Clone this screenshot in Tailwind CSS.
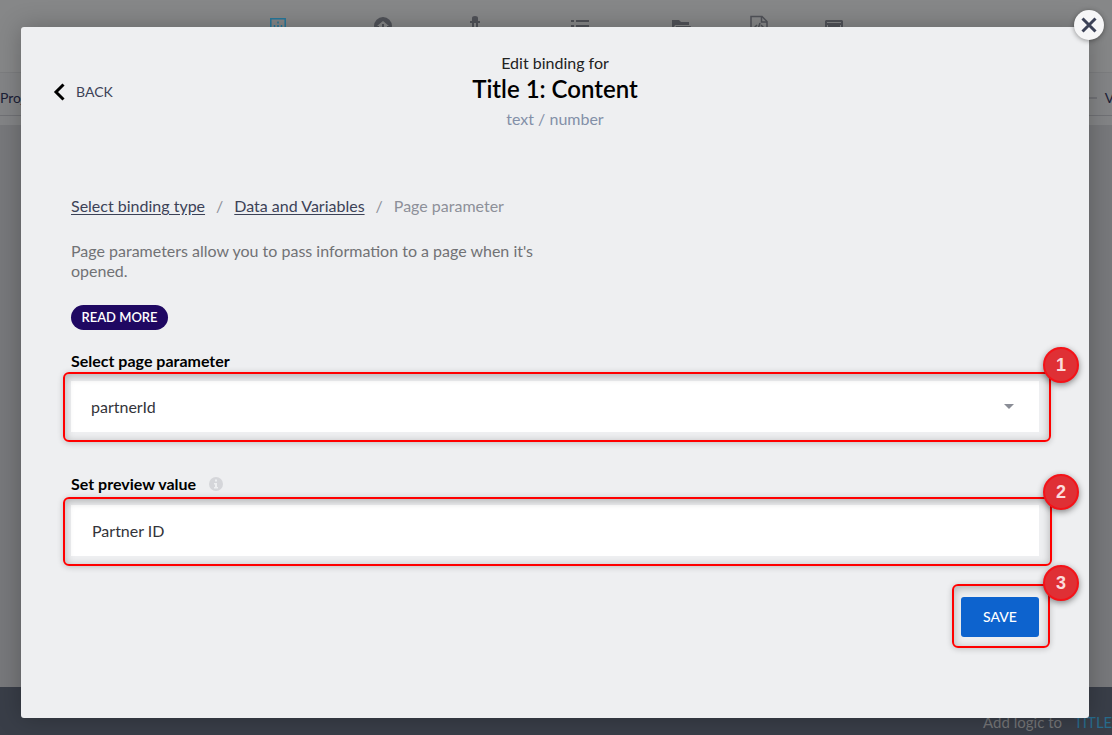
<!DOCTYPE html>
<html lang="en">
<head>
<meta charset="utf-8">
<meta name="viewport" content="width=device-width, initial-scale=1">
<title>Edit binding</title>
<script src="https://cdn.jsdelivr.net/npm/@tailwindcss/browser@4"></script>
</head>
<body class="relative min-h-screen overflow-hidden bg-[#77787b] font-['Lato',sans-serif] text-base">
<!-- Page editor behind the dialog -->
<div class="absolute inset-0 flex flex-col">
  <header class="flex h-[73px] justify-center border-b border-[#7c7d7f] bg-[#868788] pt-3 pr-5 text-[#505258]">
    <div class="flex w-[100px] justify-center text-[#25779b]">
      <svg class="size-6" viewBox="0 0 24 24" fill="none" stroke="currentColor" stroke-width="1.5"><path d="M4.800 6.800h14.400v14H4.800z"/><path d="M8.500 13v6M12 9.500v2M12 13v6M15.500 13v6" stroke-width="1.500"/></svg>
    </div>
    <div class="flex w-[110px] justify-center">
      <svg class="size-6" viewBox="0 0 24 24" fill="currentColor"><path fill-rule="evenodd" d="M12 5a9 9 0 1 0 0 18 9 9 0 0 0 0-18Zm0 4 6 5h-2v5H8v-5H6Z"/><path d="M11 12h2v5h-2z"/></svg>
    </div>
    <div class="flex w-[74px] justify-center">
      <svg class="size-6" viewBox="0 0 24 24" fill="currentColor"><path d="M9 9V6q0-2 3-2t3 2v3h2v2H7V9Z"/><path d="M9 11h2v10H9zM13 11h2v10h-2z"/></svg>
    </div>
    <div class="flex w-[136px] justify-center">
      <svg class="size-6" viewBox="0 0 24 24" fill="currentColor"><path d="M3 8h3v2H3zM8 8h13v2H8zM3 13h3v2H3zM8 13h13v2H8zM3 18h3v2H3zM8 18h13v2H8z"/></svg>
    </div>
    <div class="flex w-[66px] justify-center">
      <svg class="size-6" viewBox="0 0 24 24" fill="currentColor"><path d="M3 8h7l2 2h8v3H6l-3 6Z"/><path d="M7 14h15l-3 7H4Z"/></svg>
    </div>
    <div class="flex w-[90px] justify-center">
      <svg class="size-6" viewBox="0 0 24 24" fill="none" stroke="currentColor" stroke-width="1.500"><path d="M4 4.500h11l5 5V22H4z"/><path d="M14.500 4.500V10H20M10 13l-2 2 2 2M13 11l-2 6M14 13l2 2-2 2"/></svg>
    </div>
    <div class="flex w-[60px] justify-center">
      <svg class="size-6" viewBox="0 0 24 24" fill="currentColor"><path fill-rule="evenodd" d="M4 8h16l1 1v11H3V9Zm1 2v1h14v-1Zm0 3v5h14v-5Z"/><path d="M6 13h12v2H6z"/></svg>
    </div>
  </header>
  <div class="flex h-[52px] flex-col bg-[#838486]">
    <div class="flex h-[43px] items-center justify-between border-b border-[#707175] text-sm text-[#1b2037]">
      <span class="mt-2 whitespace-nowrap">Project</span>
      <span class="mt-2 -mr-6 flex items-center gap-2 whitespace-nowrap"><span class="h-0.5 w-3 bg-[#717276]"></span>View</span>
    </div>
  </div>
  <div class="flex-1 bg-[#77787b]"></div>
  <footer class="flex h-12 items-end justify-end gap-3 overflow-hidden bg-[#393e48] pb-[3px] text-[15px] leading-5 whitespace-nowrap text-[#747577]">
    <span>Add logic to</span><span class="-mr-3 w-[50px] text-[#286b8c]">TITLE 1</span>
  </footer>
</div>

<!-- Dialog -->
<div class="relative flex min-h-screen pt-[27px] pr-[23px] pb-[17px] pl-[21px]">
  <main role="dialog" aria-labelledby="dialog-title" class="relative flex-1 rounded-[3px] bg-[#eeeff1] px-[50px] shadow-[0_0_24px_rgba(0,0,0,0.25)]">
    <button type="button" aria-label="Close" class="absolute -top-[17px] -right-[15px] flex size-[30px] items-center justify-center rounded-full bg-[#f6f6f7] text-[#3c4257] shadow-[0_1px_5px_rgba(0,0,0,0.4)]">
      <svg class="size-4" viewBox="0 0 16 16" fill="none" stroke="currentColor" stroke-width="3"><path d="m1.500 1.500 13 13m0-13-13 13"/></svg>
    </button>
    <header class="relative pt-[26px] text-center">
      <button type="button" class="absolute top-[55px] -left-[18px] flex items-center gap-[11px] text-sm leading-5 text-[#3c4257]">
        <svg class="h-[18px] w-3" viewBox="0 0 12 18" fill="none" stroke="#000" stroke-width="3"><path d="m10.500 1.500-7.500 7.500 7.500 7.500"/></svg>BACK
      </button>
      <p class="leading-5 text-[#222]">Edit binding for</p>
      <h1 id="dialog-title" class="text-2xl leading-8 font-semibold text-black">Title 1: Content</h1>
      <p class="pt-1 leading-5 text-[#8390a8]">text / number</p>
    </header>
    <nav aria-label="Breadcrumb" class="mt-[67px] flex gap-[11px] leading-5 text-[#8d9099]">
      <a href="#" class="text-[#3c4257] underline underline-offset-2">Select binding type</a><span>/</span><a href="#" class="text-[#3c4257] underline underline-offset-2">Data and Variables</a><span>/</span><span>Page parameter</span>
    </nav>
    <p class="mt-[25px] max-w-[484px] leading-5 text-[#717275]">Page parameters allow you to pass information to a page when it's opened.</p>
    <a href="#" class="mt-6 flex h-[25px] w-[97px] items-center justify-center rounded-full bg-[#1f0862] text-[13px] font-semibold text-white">READ MORE</a>
    <label for="parameter" class="mt-[21px] block text-base leading-5 font-bold text-black">Select page parameter</label>
    <div class="relative mt-[10px]">
      <select id="parameter" class="block h-[51px] w-full appearance-none bg-white px-5 text-[#33343a]"><option>partnerId</option></select>
      <svg class="pointer-events-none absolute top-[23px] right-[25px] h-[5px] w-[10px] text-[#8a8d96]" viewBox="0 0 10 5" fill="currentColor"><path d="M0 0h10L5 5z"/></svg>
      <div class="pointer-events-none absolute -top-[9px] -right-3 -bottom-[10px] -left-2 rounded-md border-2 border-[#f00] shadow-[0_1px_6px_rgba(0,0,0,0.2),inset_0_2px_8px_rgba(0,0,0,0.28)]"></div>
      <span class="absolute -top-[34px] -right-10 flex size-9 items-center justify-center rounded-full border-2 border-[#f51218] bg-[#df3035] font-['Liberation_Sans',sans-serif] text-lg font-bold text-[#fbdcdc] shadow-[0_2px_6px_rgba(0,0,0,0.45)]">1</span>
    </div>
    <div class="mt-[42px] flex items-center gap-[13px]">
      <label for="preview" class="text-base leading-5 font-bold text-black">Set preview value</label>
      <svg class="size-[14px]" viewBox="0 0 14 14"><circle cx="7" cy="7" r="7" fill="#d5d6da"/><path d="M6 2.500h2v2H6zM5 6h3v4h1v1.500H5V10h1V7.500H5z" fill="#eeeff1"/></svg>
    </div>
    <div class="relative mt-[11px]">
      <input id="preview" type="text" value="Partner ID" class="block h-[51px] w-full bg-white px-[21px] pb-px text-[#33343a]">
      <div class="pointer-events-none absolute -top-2 -right-[13px] -bottom-[10px] -left-2 rounded-md border-2 border-[#f00] shadow-[0_1px_6px_rgba(0,0,0,0.2),inset_0_2px_8px_rgba(0,0,0,0.28)]"></div>
      <span class="absolute -top-[31px] -right-10 flex size-9 items-center justify-center rounded-full border-2 border-[#f51218] bg-[#df3035] font-['Liberation_Sans',sans-serif] text-lg font-bold text-[#fbdcdc] shadow-[0_2px_6px_rgba(0,0,0,0.45)]">2</span>
    </div>
    <div class="relative mt-[41px] ml-auto w-[78px]">
      <div class="pointer-events-none absolute -top-[13px] -right-[11px] -bottom-[11px] -left-[9px] rounded-md border-2 border-[#f00] shadow-[0_1px_6px_rgba(0,0,0,0.2),inset_0_2px_8px_rgba(0,0,0,0.28)]"></div>
      <button type="submit" class="relative block h-10 w-full rounded-[3px] bg-[#0d63ce] text-sm font-medium text-white">SAVE</button>
      <span class="absolute -top-8 -right-10 flex size-9 items-center justify-center rounded-full border-2 border-[#f51218] bg-[#df3035] font-['Liberation_Sans',sans-serif] text-lg font-bold text-[#fbdcdc] shadow-[0_2px_6px_rgba(0,0,0,0.45)]">3</span>
    </div>
  </main>
</div>
</body>
</html>
